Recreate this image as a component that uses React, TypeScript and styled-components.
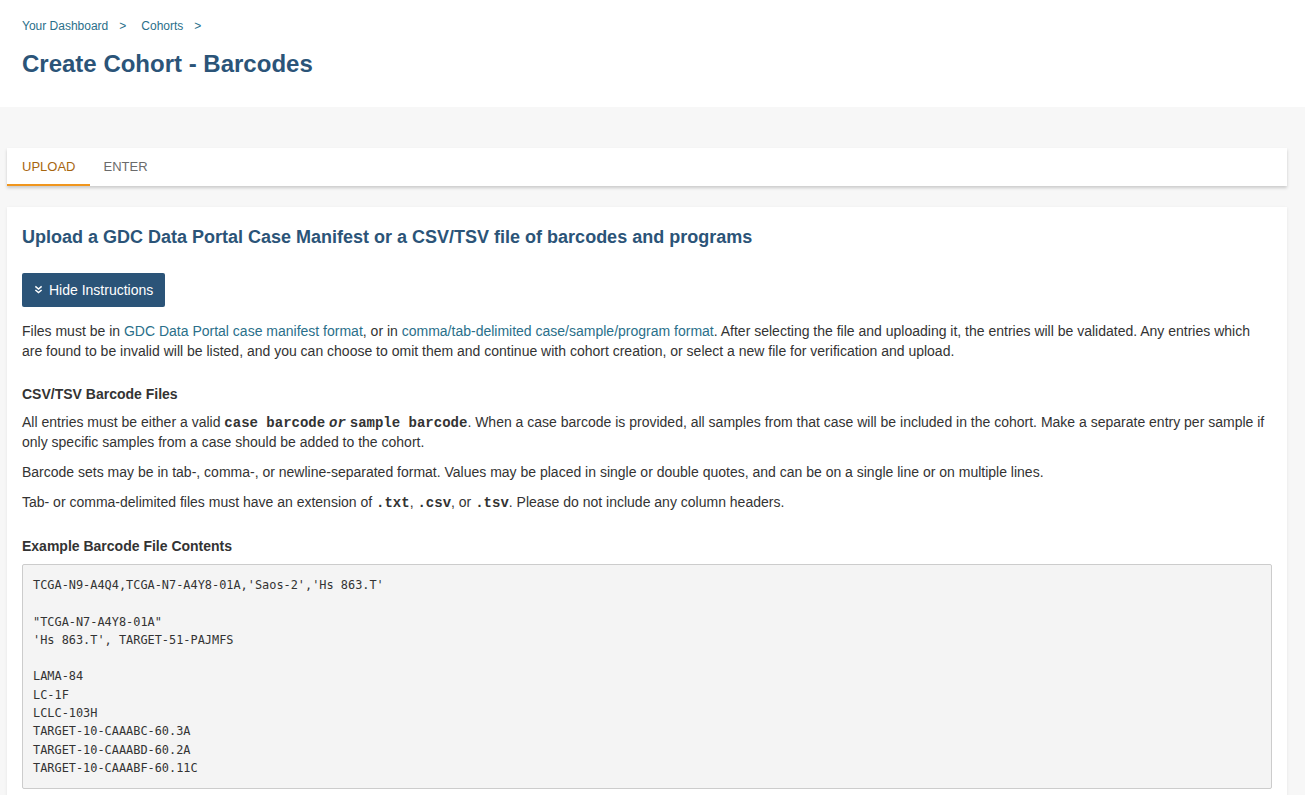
import React from "react";
import styled, { createGlobalStyle } from "styled-components";

const GlobalStyle = createGlobalStyle`
  html, body {
    margin: 0;
    padding: 0;
    background: #f7f7f7;
    font-family: "Liberation Sans", Arial, sans-serif;
    color: #333;
  }
`;

const tabs = ["UPLOAD", "ENTER"];

const exampleLines = [
  "TCGA-N9-A4Q4,TCGA-N7-A4Y8-01A,'Saos-2','Hs 863.T'",
  "",
  '"TCGA-N7-A4Y8-01A"',
  "'Hs 863.T', TARGET-51-PAJMFS",
  "",
  "LAMA-84",
  "LC-1F",
  "LCLC-103H",
  "TARGET-10-CAAABC-60.3A",
  "TARGET-10-CAAABD-60.2A",
  "TARGET-10-CAAABF-60.11C",
];

function App() {
  return (
    <>
      <GlobalStyle />
      <Header>
        <Breadcrumbs>
          <Crumb href="#">Your Dashboard</Crumb>
          <Sep>&gt;</Sep>
          <Crumb href="#">Cohorts</Crumb>
          <Sep>&gt;</Sep>
        </Breadcrumbs>
        <PageTitle>Create Cohort - Barcodes</PageTitle>
      </Header>
      <Main>
        <TabBar>
          {tabs.map((t, i) => (
            <Tab key={t} $active={i === 0}>
              {t}
            </Tab>
          ))}
        </TabBar>
        <Card>
          <CardTitle>
            Upload a GDC Data Portal Case Manifest or a CSV/TSV file of barcodes and programs
          </CardTitle>
          <ToggleButton type="button">
            <svg width="9" height="9" viewBox="0 0 10 10" fill="none" stroke="#fff" strokeWidth="1.6">
              <polyline points="1.5,1.5 5,4.5 8.5,1.5" />
              <polyline points="1.5,5.5 5,8.5 8.5,5.5" />
            </svg>
            Hide Instructions
          </ToggleButton>
          <Para $top={14}>
            Files must be in <Link href="#">GDC Data Portal case manifest format</Link>, or in{" "}
            <Link href="#">comma/tab-delimited case/sample/program format</Link>. After selecting
            the file and uploading it, the entries will be validated. Any entries which are found to
            be invalid will be listed, and you can choose to omit them and continue with cohort
            creation, or select a new file for verification and upload.
          </Para>
          <SubHead $top={23}>CSV/TSV Barcode Files</SubHead>
          <Para $top={8}>
            All entries must be either a valid <Code>case barcode</Code> <Or>or</Or>{" "}
            <Code>sample barcode</Code>. When a case barcode is provided, all samples from that
            case will be included in the cohort. Make a separate entry per sample if only specific
            samples from a case should be added to the cohort.
          </Para>
          <Para $top={10}>
            Barcode sets may be in tab-, comma-, or newline-separated format. Values may be placed
            in single or double quotes, and can be on a single line or on multiple lines.
          </Para>
          <Para $top={10}>
            Tab- or comma-delimited files must have an extension of <Code>.txt</Code>,{" "}
            <Code>.csv</Code>, or <Code>.tsv</Code>. Please do not include any column headers.
          </Para>
          <SubHead $top={24}>Example Barcode File Contents</SubHead>
          <Example>{exampleLines.join("\n")}</Example>
        </Card>
      </Main>
    </>
  );
}

export default App;

const Header = styled.header`
  background: #fff;
  height: 107px;
  box-sizing: border-box;
  padding: 18px 22px 0;
`;

const Breadcrumbs = styled.nav`
  display: flex;
  align-items: center;
  font-size: 12px;
  line-height: 16px;
`;

const Crumb = styled.a`
  color: #2a6f8a;
  text-decoration: none;
`;

const Sep = styled.span`
  color: #2a6f8a;
  margin: 0 15px 0 11px;
`;

const PageTitle = styled.h1`
  margin: 16px 0 0;
  font-size: 24px;
  line-height: 28px;
  font-weight: bold;
  color: #2b5478;
`;

const Main = styled.main`
  display: flex;
  flex-direction: column;
  gap: 21px;
  padding: 41px 18px 0 7px;
`;

const TabBar = styled.div`
  display: flex;
  background: #fff;
  height: 38px;
  box-shadow: 0 2px 3px rgba(0, 0, 0, 0.18);
`;

const Tab = styled.div<{ $active?: boolean }>`
  display: flex;
  align-items: center;
  padding: 1px 15px 0;
  font-size: 13px;
  color: ${(p) => (p.$active ? "#a8660f" : "#6b6b6b")};
  border-bottom: 2px solid ${(p) => (p.$active ? "#f0961e" : "transparent")};
  & + & {
    padding-left: 13px;
  }
`;

const Card = styled.section`
  background: #fff;
  padding: 19px 15px 20px;
  box-shadow: 0 1px 3px rgba(0, 0, 0, 0.08);
`;

const CardTitle = styled.h2`
  margin: 0;
  font-size: 18px;
  line-height: 22px;
  font-weight: bold;
  color: #2b5478;
`;

const ToggleButton = styled.button`
  display: flex;
  align-items: center;
  gap: 6px;
  margin-top: 25px;
  height: 34px;
  padding: 0 12px 1px;
  background: #2b5478;
  color: #fff;
  border: none;
  border-radius: 2px;
  font-family: "Liberation Sans", Arial, sans-serif;
  font-size: 14px;
`;

const Para = styled.p<{ $top: number }>`
  margin: ${(p) => p.$top}px 0 0;
  font-size: 14px;
  line-height: 20px;
  color: #333;
`;

const Link = styled.a`
  color: #2a6f8a;
  text-decoration: none;
`;

const Code = styled.code`
  font-family: "Liberation Mono", "Courier New", monospace;
  font-weight: bold;
  font-size: 14px;
  line-height: 14px;
  color: #333;
`;

const Or = styled.em`
  font-family: "Liberation Mono", "Courier New", monospace;
  font-weight: bold;
  font-size: 14px;
  line-height: 14px;
`;

const SubHead = styled.h3<{ $top: number }>`
  margin: ${(p) => p.$top}px 0 0;
  font-size: 14px;
  line-height: 20px;
  font-weight: bold;
  color: #333;
`;

const Example = styled.pre`
  margin: 8px 0 0;
  padding: 11px 10px 11px;
  background: #f4f4f4;
  border: 1px solid #cccccc;
  border-radius: 2px;
  font-family: "DejaVu Sans Mono", monospace;
  font-size: 11.9px;
  line-height: 18.3px;
  color: #333;
  white-space: pre;
`;
